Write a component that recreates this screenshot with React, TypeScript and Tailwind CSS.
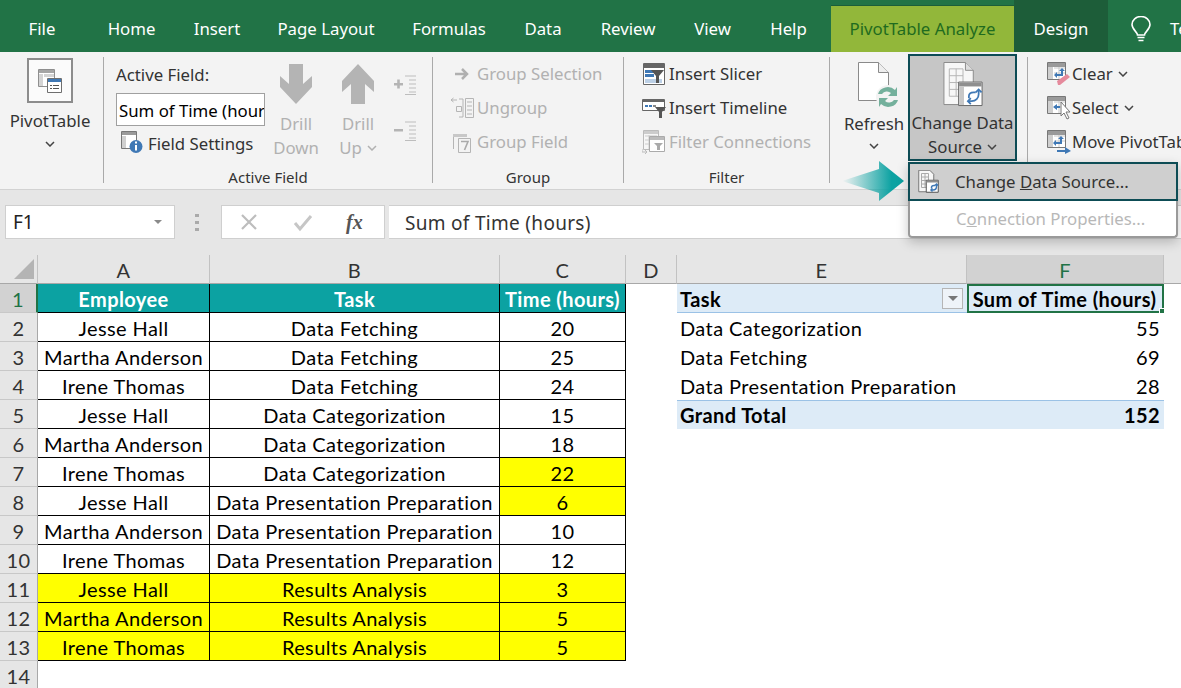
import type { ReactNode } from 'react';

const ui = "font-['Noto_Sans','Open_Sans',sans-serif]";

// grey/blue ribbon icons, drawn at their pixel size
function Chevron({ color = '#444' }: { color?: string }) {
  return (
    <svg width="10" height="6" viewBox="0 0 10 6" className="inline-block">
      <path d="M1 1l4 4 4-4" fill="none" stroke={color} strokeWidth="1.5" />
    </svg>
  );
}

function PivotIcon() {
  return (
    <svg width="24" height="24" viewBox="0 0 24 24">
      <path d="M.5.5h16v17H.5z" fill="#fff" stroke="#8f8f8f" />
      <path d="M1 1h15v3H1z" fill="#a5a5a5" />
      <path d="M1 5h4v12H1zM6 5h10v3H6z" fill="#d4d4d4" />
      <path d="M9.5 9.5h14v14h-14z" fill="#fff" stroke="#6f6f6f" />
      <path d="M10 10h13v3H10z" fill="#3f78b5" />
      <path d="M12 16h2v1h-2zM12 19h2v1h-2zM15 16h6v1h-6zM15 19h6v1h-6z" fill="#555" />
    </svg>
  );
}

function FieldSettingsIcon() {
  return (
    <svg width="22" height="22" viewBox="0 0 22 22">
      <path d="M.5.5h15v17H.5z" fill="#fff" stroke="#777" />
      <path d="M1 1h14v3H1z" fill="#9a9a9a" />
      <path d="M1 5h4v12H1z" fill="#cfcfcf" />
      <circle cx="15" cy="15.5" r="6.5" fill="#3f78b5" />
      <path d="M14 14h2v5.5h-2zM14 10.5h2v2h-2z" fill="#fff" />
    </svg>
  );
}

function ArrowDown({ up }: { up?: boolean }) {
  return (
    <svg width="32" height="40" viewBox="0 0 32 40" className={up ? 'rotate-180' : ''}>
      <path d="M9 0h14v20l9-8v11L16 40 0 23V12l9 8z" fill="#b4b4b4" />
    </svg>
  );
}

function OutlineIcon({ plus }: { plus?: boolean }) {
  return (
    <svg width="23" height="20" viewBox="0 0 23 20">
      <path d="M0 8h9v2.500H0z" fill="#b4b4b4" />
      {plus && <path d="M3.200 4.500h2.600v9H3.200z" fill="#b4b4b4" />}
      <path d="M11 1h11M15 5h7M15 9h7M15 13h7M15 17h7M11 19.500h11" stroke="#bdbdbd" fill="none" />
    </svg>
  );
}

function GroupArrowIcon() {
  return (
    <svg width="16" height="14" viewBox="0 0 16 14">
      <path d="M1 7h12M8 2l5 5-5 5" fill="none" stroke="#b0b0b0" strokeWidth="2.500" />
    </svg>
  );
}

function UngroupIcon() {
  return (
    <svg width="25" height="22" viewBox="0 0 25 22">
      <path d="M1 3h6M3.500 1L1 3l2.500 2" fill="none" stroke="#b5b5b5" />
      <path d="M9 2h4v18H9M6.500 9.500h5v5h-5zM15.500 1.500h8v19h-8z" fill="none" stroke="#b5b5b5" />
      <path d="M17 5h5M17 9h5M17 13h5M17 17h5" stroke="#b5b5b5" />
    </svg>
  );
}

function GroupFieldIcon() {
  return (
    <svg width="18" height="21" viewBox="0 0 18 21">
      <path d="M0 2h14v3H0z" fill="#c8c8c8" />
      <path d="M.5 5v12M5.500 6.500h12v14h-12z" fill="none" stroke="#b5b5b5" />
      <path d="M8 9.500h7l-3.500 8.500" fill="none" stroke="#aaa" strokeWidth="1.600" />
    </svg>
  );
}

function SlicerIcon() {
  return (
    <svg width="22" height="22" viewBox="0 0 22 22">
      <path d="M.5.500h21v21H.5z" fill="#fff" stroke="#666" />
      <path d="M1 1h20v4H1z" fill="#666" />
      <path d="M2 7h12v3H2z" fill="#3f78b5" />
      <path d="M2 11h9v3H2z" fill="#3f78b5" />
      <path d="M2 16h17v4H2z" fill="#bcd0e6" />
      <path d="M8 7h13l-5 6v7h-3v-7z" fill="#555" />
    </svg>
  );
}

function TimelineIcon() {
  return (
    <svg width="24" height="19" viewBox="0 0 24 19">
      <path d="M.5.500h22v11H.5z" fill="#fff" stroke="#666" />
      <path d="M1 1h21v2H1z" fill="#666" />
      <path d="M3 6h3v2H3zM7 6h3v2H7z" fill="#3f78b5" />
      <path d="M11 6h3v2h-3z" fill="#888" />
      <path d="M13 8h11l-4 5v6h-3v-6z" fill="#555" />
    </svg>
  );
}

function ConnectionsIcon() {
  return (
    <svg width="24" height="24" viewBox="0 0 24 24">
      <path d="M1.500.500h15v19h-15z" fill="#f6f6f6" stroke="#bbb" />
      <path d="M2 1h14v3H2z" fill="#ccc" />
      <path d="M3 6h12M3 10h12M3 14h12M7 5v14" stroke="#ccc" />
      <path d="M7.500 6.500h15v15h-15z" fill="#fff" stroke="#aaa" />
      <path d="M8 7h14v3H8z" fill="#bbb" />
      <path d="M12 13h9l-3 3v4h-3v-4z" fill="#aaa" />
      <path d="M0 19v3h5M3 20l2 2-2 2" fill="none" stroke="#bbb" />
    </svg>
  );
}

function RefreshIcon() {
  return (
    <svg width="42" height="48" viewBox="0 0 42 48">
      <path d="M.500.500h20l10 10v28H.500z" fill="#fff" stroke="#8a8a8a" />
      <path d="M20.500.500v10h10" fill="#eee" stroke="#8a8a8a" />
      <circle cx="30" cy="35" r="12" fill="#f3f3f3" />
      <path d="M20 32a10 9 0 0 1 17-4l2-3v9h-9l3-3a6 6 0 0 0-9 1z" fill="#74b09c" />
      <path d="M40 38a10 9 0 0 1-17 4l-2 3v-9h9l-3 3a6 6 0 0 0 9-1z" fill="#74b09c" />
    </svg>
  );
}

function SwapArrows({ width = 1.800 }: { width?: number }) {
  return (
    <g fill="none" stroke="#3f78b5" strokeWidth={width}>
      <path d="M25 40h4c4 0 7-3 7-7v-4" />
      <path d="M28 37l-3 3 3 3M33 31l3-3 3 3" />
      <path d="M26 37v-2c0-3 2-4 5-4h2" />
    </g>
  );
}

function ChangeSourceIcon() {
  return (
    <svg width="40" height="46" viewBox="0 0 40 46">
      <path d="M.500.500h22l8 8v35H.500z" fill="#f7f7f7" stroke="#8a8a8a" />
      <path d="M22.500.500v8h8" fill="#ddd" stroke="#8a8a8a" />
      <path d="M6 7h14v28H6zM6 14h14M6 21h14M6 28h14M13 7v28" fill="none" stroke="#b5b5b5" />
      <path d="M15.500 20.500h24v24h-24z" fill="#fff" stroke="#666" />
      <path d="M16 21h23v4H16z" fill="#8f8f8f" />
      <path d="M16 25h5v19h-5z" fill="#c8c8c8" />
      <SwapArrows />
    </svg>
  );
}

function SmallChangeSourceIcon() {
  return (
    <svg width="21" height="23" viewBox="0 0 40 46">
      <path d="M.500.500h22l8 8v35H.500z" fill="#f7f7f7" stroke="#777" strokeWidth="2" />
      <path d="M6 7h14v28H6zM6 14h14M6 21h14M6 28h14M13 7v28" fill="none" stroke="#aaa" strokeWidth="2" />
      <path d="M15.500 20.500h24v24h-24z" fill="#fff" stroke="#555" strokeWidth="2" />
      <path d="M16 21h23v4H16z" fill="#8f8f8f" />
      <SwapArrows width={3} />
    </svg>
  );
}

function ActionIcon({ kind }: { kind: 'clear' | 'select' | 'move' }) {
  return (
    <svg width="24" height="24" viewBox="0 0 24 24">
      <path d="M.500.500h18v17H.500z" fill="#fff" stroke="#777" />
      <path d="M1 1h17v4H1z" fill="#9a9a9a" />
      <path d="M1 5h5v12H1z" fill="#cfcfcf" />
      <path d="M7 6h11M7 11h11M12 5v12" stroke="#c9c9c9" />
      {kind === 'clear' && (
        <>
          <path d="M7 13l3-3v2h4V9l-2 0 3-3 3 3h-2v5H10v2z" fill="#3f78b5" />
          <path d="M10 19l10-7 3 3-10 8h-2z" fill="#e58a9c" />
        </>
      )}
      {kind === 'select' && (
        <>
          <path d="M6 11l4-3v2h3v2h-3v2z" fill="#3f78b5" />
          <path d="M14 6v14l3-3 3 6 2-1-3-6h4z" fill="#fff" stroke="#777" />
        </>
      )}
      {kind === 'move' && (
        <>
          <path d="M6 13l3-3v2h4V9h-2l3-3 3 3h-2v5H9v2z" fill="#3f78b5" />
          <path d="M10 20h8v-3l6 4-6 3v-2h-8z" fill="#3f78b5" />
        </>
      )}
    </svg>
  );
}

function BulbIcon() {
  return (
    <svg width="20" height="26" viewBox="0 0 20 26">
      <path d="M6.500 19c0-3-5.500-5.500-5.500-10.500a9 8 0 0 1 18 0c0 5-5.500 7.500-5.500 10.500z" fill="none" stroke="#fff" strokeWidth="1.600" />
      <path d="M6.500 21.500h7M7.500 24.500h5" stroke="#fff" strokeWidth="1.600" />
    </svg>
  );
}

function SmallRow({ icon, label, disabled, iconW, chevron }: { icon: ReactNode; label: string; disabled?: boolean; iconW: number; chevron?: boolean }) {
  return (
    <div className={`flex h-[34px] items-center whitespace-nowrap ${disabled ? 'text-[#b1b1b1]' : 'text-[#333]'}`}>
      <span className="flex shrink-0 items-center justify-center" style={{ width: iconW }}>{icon}</span>
      <span>{label}</span>
      {chevron && <span className="ml-[5px] flex"><Chevron /></span>}
    </div>
  );
}

function Group({ width, label, children }: { width: number; label?: string; children: ReactNode }) {
  return (
    <div className="mt-[5px] flex h-[126px] shrink-0 flex-col border-r border-[#a9a9a9]" style={{ width }}>
      <div className="flex h-[109px]">{children}</div>
      {label && <div className="h-[17px] text-center text-[15px] leading-[22px] text-[#333]">{label}</div>}
    </div>
  );
}

const tabs = [
  { name: 'File', w: 84 },
  { name: 'Home', w: 95 },
  { name: 'Insert', w: 76 },
  { name: 'Page Layout', w: 142 },
  { name: 'Formulas', w: 104 },
  { name: 'Data', w: 84 },
  { name: 'Review', w: 86 },
  { name: 'View', w: 83 },
  { name: 'Help', w: 69 },
];

function TabBar() {
  return (
    <div className="flex h-[52px] bg-[#217346] text-[16.8px] text-white">
      {tabs.map((t) => (
        <div key={t.name} className="shrink-0 pt-[12px] text-center leading-[34px]" style={{ width: t.w }}>
          {t.name}
        </div>
      ))}
      <div className="ml-[8px] mt-[5px] h-[47px] w-[183px] shrink-0 border-t border-[#1b5e3a] bg-[#92b73a] pt-[6px] text-center leading-[34px] text-[#1f6b1f]">
        PivotTable Analyze
      </div>
      <div className="h-[52px] w-[94px] shrink-0 bg-[#1d5d39] pt-[12px] text-center leading-[34px]">Design</div>
      <div className="ml-[23px] mt-[16px] shrink-0"><BulbIcon /></div>
      <div className="ml-[19px] shrink-0 pt-[12px] leading-[34px]">Te</div>
    </div>
  );
}

function Ribbon() {
  return (
    <div className="flex h-[138px] border-b border-[#d2d2d2] bg-[#f3f3f3] text-[16.8px] text-[#333]">
      <Group width={104}>
        <div className="flex w-full flex-col items-center pr-[3px]">
          <div className="mt-[1px] flex h-[45px] w-[46px] items-center justify-center border-[2.5px] border-[#8c8c8c] bg-[#fbfbfb]">
            <PivotIcon />
          </div>
          <div className="mt-[6px] leading-[24px]">PivotTable</div>
          <div className="mt-[8px] flex"><Chevron /></div>
        </div>
      </Group>
      <Group width={329} label="Active Field">
        <div className="ml-[12px] w-[149px] shrink-0">
          <div className="h-[36px] leading-[36px]">Active Field:</div>
          <div className="h-[33px] overflow-hidden whitespace-nowrap border border-[#a0a0a0] bg-white pl-[2px] leading-[34px] text-black">Sum of Time (hours)</div>
          <div className="flex h-[32px] items-center whitespace-nowrap pl-[5px]">
            <FieldSettingsIcon />
            <span className="ml-[5px] mt-[4px]">Field Settings</span>
          </div>
        </div>
        <div className="flex w-[62px] flex-col items-center pt-[7px] text-[#b1b1b1]">
          <ArrowDown />
          <div className="mt-[8px] leading-[24px]">Drill</div>
          <div className="leading-[24px]">Down</div>
        </div>
        <div className="flex w-[62px] flex-col items-center pt-[7px] text-[#b1b1b1]">
          <ArrowDown up />
          <div className="mt-[8px] leading-[24px]">Drill</div>
          <div className="flex items-center gap-[5px] leading-[24px]">Up <Chevron color="#b1b1b1" /></div>
        </div>
        <div className="ml-[5px] flex flex-col gap-[26px] pt-[18px]">
          <OutlineIcon plus />
          <OutlineIcon />
        </div>
      </Group>
      <Group width={191} label="Group">
        <div className="pl-[14px]">
          <SmallRow icon={<GroupArrowIcon />} iconW={30} label="Group Selection" disabled />
          <SmallRow icon={<UngroupIcon />} iconW={30} label="Ungroup" disabled />
          <SmallRow icon={<GroupFieldIcon />} iconW={30} label="Group Field" disabled />
        </div>
      </Group>
      <Group width={206} label="Filter">
        <div className="pl-[15px]">
          <SmallRow icon={<SlicerIcon />} iconW={30} label="Insert Slicer" />
          <SmallRow icon={<TimelineIcon />} iconW={30} label="Insert Timeline" />
          <SmallRow icon={<ConnectionsIcon />} iconW={30} label="Filter Connections" disabled />
        </div>
      </Group>
      <Group width={198}>
        <div className="flex w-[78px] flex-col items-center pl-[10px] pt-[5px]">
          <span className="ml-[9px] flex"><RefreshIcon /></span>
          <div className="mt-[2px] leading-[24px]">Refresh</div>
          <div className="mt-[7px] flex"><Chevron /></div>
        </div>
        <div className="-mt-[3px] flex h-[107px] w-[109px] shrink-0 flex-col items-center whitespace-nowrap border-[2.5px] border-[#0d4c55] bg-[#c6c6c6] pt-[6px]">
          <ChangeSourceIcon />
          <div className="mt-[4px] leading-[24px]">Change Data</div>
          <div className="flex items-center gap-[5px] leading-[24px]">Source <Chevron /></div>
        </div>
      </Group>
      <div className="mt-[5px] whitespace-nowrap pl-[17px]">
        <SmallRow icon={<ActionIcon kind="clear" />} iconW={27} label="Clear" chevron />
        <SmallRow icon={<ActionIcon kind="select" />} iconW={27} label="Select" chevron />
        <SmallRow icon={<ActionIcon kind="move" />} iconW={27} label="Move PivotTable" />
      </div>
    </div>
  );
}

function FormulaBar() {
  return (
    <div className="flex h-[65px] items-start bg-[#e6e6e6] pl-[5px] pt-[15px] text-[19px]">
      <div className="flex h-[34px] w-[170px] items-center justify-between border border-[#cfcfcf] bg-white pl-[7px] pr-[12px] text-[#222]">
        F1
        <span className="h-0 w-0 border-x-[4px] border-t-[4px] border-x-transparent border-t-[#8a8a8a]" />
      </div>
      <div className="ml-[20px] mt-[9px] flex h-[17px] w-[4px] flex-col justify-between">
        <span className="h-[3px] bg-[#aaa]" />
        <span className="h-[3px] bg-[#aaa]" />
        <span className="h-[3px] bg-[#aaa]" />
      </div>
      <div className="ml-[22px] flex h-[34px] w-[164px] items-center border border-[#cfcfcf] bg-white">
        <svg width="20" height="20" viewBox="0 0 20 20" className="ml-[17px]"><path d="M3 3l14 14M17 3L3 17" stroke="#bdbdbd" strokeWidth="2.200" /></svg>
        <svg width="20" height="20" viewBox="0 0 20 20" className="ml-[34px]"><path d="M2 11l5 6L18 4" fill="none" stroke="#c6c6c6" strokeWidth="3" /></svg>
        <span className="ml-[33px] font-['Liberation_Serif',serif] text-[20px] font-bold italic text-[#555]">fx</span>
      </div>
      <div className="ml-[4px] h-[34px] flex-1 border-y border-[#cfcfcf] bg-white pl-[16px] leading-[34px] tracking-[0.3px] text-[#333]">
        Sum of Time (hours)
      </div>
    </div>
  );
}

type DataRow = { e: string; t: string; h: number; yellow?: 'c' | 'all' };

const rows: DataRow[] = [
  { e: 'Jesse Hall', t: 'Data Fetching', h: 20 },
  { e: 'Martha Anderson', t: 'Data Fetching', h: 25 },
  { e: 'Irene Thomas', t: 'Data Fetching', h: 24 },
  { e: 'Jesse Hall', t: 'Data Categorization', h: 15 },
  { e: 'Martha Anderson', t: 'Data Categorization', h: 18 },
  { e: 'Irene Thomas', t: 'Data Categorization', h: 22, yellow: 'c' },
  { e: 'Jesse Hall', t: 'Data Presentation Preparation', h: 6, yellow: 'c' },
  { e: 'Martha Anderson', t: 'Data Presentation Preparation', h: 10 },
  { e: 'Irene Thomas', t: 'Data Presentation Preparation', h: 12 },
  { e: 'Jesse Hall', t: 'Results Analysis', h: 3, yellow: 'all' },
  { e: 'Martha Anderson', t: 'Results Analysis', h: 5, yellow: 'all' },
  { e: 'Irene Thomas', t: 'Results Analysis', h: 5, yellow: 'all' },
];

const pivot: Record<number, { task: string; sum: number }> = {
  2: { task: 'Data Categorization', sum: 55 },
  3: { task: 'Data Fetching', sum: 69 },
  4: { task: 'Data Presentation Preparation', sum: 28 },
};

const tableCell = 'flex items-center justify-center border-b border-r border-black pt-[1px]';
const rowHead = 'flex items-center justify-center border-b border-r border-b-[#c8c8c8] border-r-[#a8a8a8] bg-[#e6e6e6] pt-[1px] text-[#333]';
const colHead = 'flex items-center justify-center border-b border-r border-b-[#a8a8a8] border-r-[#c2c2c2] bg-[#e6e6e6] pt-[1px] text-[#333]';

function Sheet() {
  return (
    <div className="grid auto-rows-[29px] grid-cols-[38px_172px_290px_126px_51px_290px_197px_1fr] font-['Lato',sans-serif] text-[20px] tracking-[0.4px] text-black">
      <div className="relative border-b border-r border-b-[#a8a8a8] border-r-[#c2c2c2] bg-[#e6e6e6]">
        <span className="absolute bottom-[4px] right-[3px] h-0 w-0 border-b-[20px] border-l-[20px] border-b-[#b4b4b4] border-l-transparent" />
      </div>
      <div className={colHead}>A</div>
      <div className={colHead}>B</div>
      <div className={colHead}>C</div>
      <div className={colHead}>D</div>
      <div className={colHead}>E</div>
      <div className="flex items-center justify-center border-b border-r border-b-[#a8a8a8] border-r-[#c2c2c2] bg-[#d2d2d2] pt-[1px] text-[#217346]">F</div>
      <div className="border-b border-[#a8a8a8] bg-[#e6e6e6]" />

      <div className="flex items-center justify-center border-b border-r-2 border-b-[#c8c8c8] border-r-[#217346] bg-[#d2d2d2] pt-[1px] text-[#217346]">1</div>
      <div className={`${tableCell} bg-[#0ca2a2] font-bold text-white`}>Employee</div>
      <div className={`${tableCell} bg-[#0ca2a2] font-bold text-white`}>Task</div>
      <div className={`${tableCell} whitespace-nowrap bg-[#0ca2a2] font-bold text-white`}>Time (hours)</div>
      <div />
      <div className="relative flex items-center border-b border-[#9bc2e6] bg-[#ddebf7] pl-[3px] pt-[1px] font-bold">
        Task
        <span className="absolute right-[4px] top-[4px] flex h-[21px] w-[21px] items-center justify-center border border-[#b5b5b5] bg-[#eef3f8]">
          <span className="h-0 w-0 border-x-[5px] border-t-[5px] border-x-transparent border-t-[#777]" />
        </span>
      </div>
      <div className="relative flex items-center justify-center whitespace-nowrap border-2 border-[#217346] bg-[#ddebf7] pr-[2px] font-bold">
        Sum of Time (hours)
        <span className="absolute -bottom-[3px] -right-[3px] h-[6px] w-[6px] border border-white bg-[#217346]" />
      </div>
      <div />

      {rows.map((r, i) => {
        const n = i + 2;
        const p = pivot[n];
        const rowBg = r.yellow === 'all' ? 'bg-[#ffff00]' : '';
        const hoursBg = r.yellow ? 'bg-[#ffff00]' : '';
        return (
          <div key={n} className="contents">
            <div className={rowHead}>{n}</div>
            <div className={`${tableCell} whitespace-nowrap ${rowBg}`}>{r.e}</div>
            <div className={`${tableCell} whitespace-nowrap ${rowBg}`}>{r.t}</div>
            <div className={`${tableCell} ${hoursBg}`}>{r.h}</div>
            <div />
            {n === 5 ? (
              <>
                <div className="flex items-center border-t border-[#9bc2e6] bg-[#ddebf7] pl-[3px] font-bold">Grand Total</div>
                <div className="flex items-center justify-end border-t border-[#9bc2e6] bg-[#ddebf7] pr-[4px] font-bold">152</div>
              </>
            ) : (
              <>
                <div className="flex items-center whitespace-nowrap pl-[3px] pt-[1px]">{p?.task}</div>
                <div className="flex items-center justify-end pr-[4px] pt-[1px]">{p?.sum}</div>
              </>
            )}
            <div />
          </div>
        );
      })}

      <div className={rowHead}>14</div>
    </div>
  );
}

function DataSourceMenu() {
  return (
    <div className={`absolute left-[908px] top-[162px] w-[270px] rounded-b-[4px] text-[16.8px] shadow-[0_4px_12px_rgba(0,0,0,0.22)] ${ui}`}>
      <div className="flex h-[39px] items-center border-[2.5px] border-[#0d4c55] bg-[#cfcfcf] pl-[8px] text-[#333]">
        <SmallChangeSourceIcon />
        <span className="ml-[16px]">
          Change <span className="underline">D</span>ata Source...
        </span>
      </div>
      <div className="flex h-[37px] items-center rounded-b-[4px] border-x-2 border-b-2 border-[#9a9a9a] bg-white pl-[46px] text-[#b8b8b8]">
        C<span className="underline">o</span>nnection Properties...
      </div>
    </div>
  );
}

function PointerArrow() {
  return (
    <svg width="62" height="40" viewBox="0 0 62 40" className="absolute left-[842px] top-[161px]">
      <defs>
        <linearGradient id="pointer" x1="0" y1="0" x2="1" y2="0">
          <stop offset="0" stopColor="#0ca2a2" stopOpacity="0" />
          <stop offset="0.8" stopColor="#0ca2a2" />
          <stop offset="1" stopColor="#0ca2a2" />
        </linearGradient>
      </defs>
      <path d="M0 20l37-12V0l25 20-25 20v-8z" fill="url(#pointer)" />
    </svg>
  );
}

export default function App() {
  return (
    <div className={`relative h-[688px] w-[1181px] overflow-hidden bg-white ${ui}`}>
      <TabBar />
      <Ribbon />
      <FormulaBar />
      <Sheet />
      <PointerArrow />
      <DataSourceMenu />
    </div>
  );
}
